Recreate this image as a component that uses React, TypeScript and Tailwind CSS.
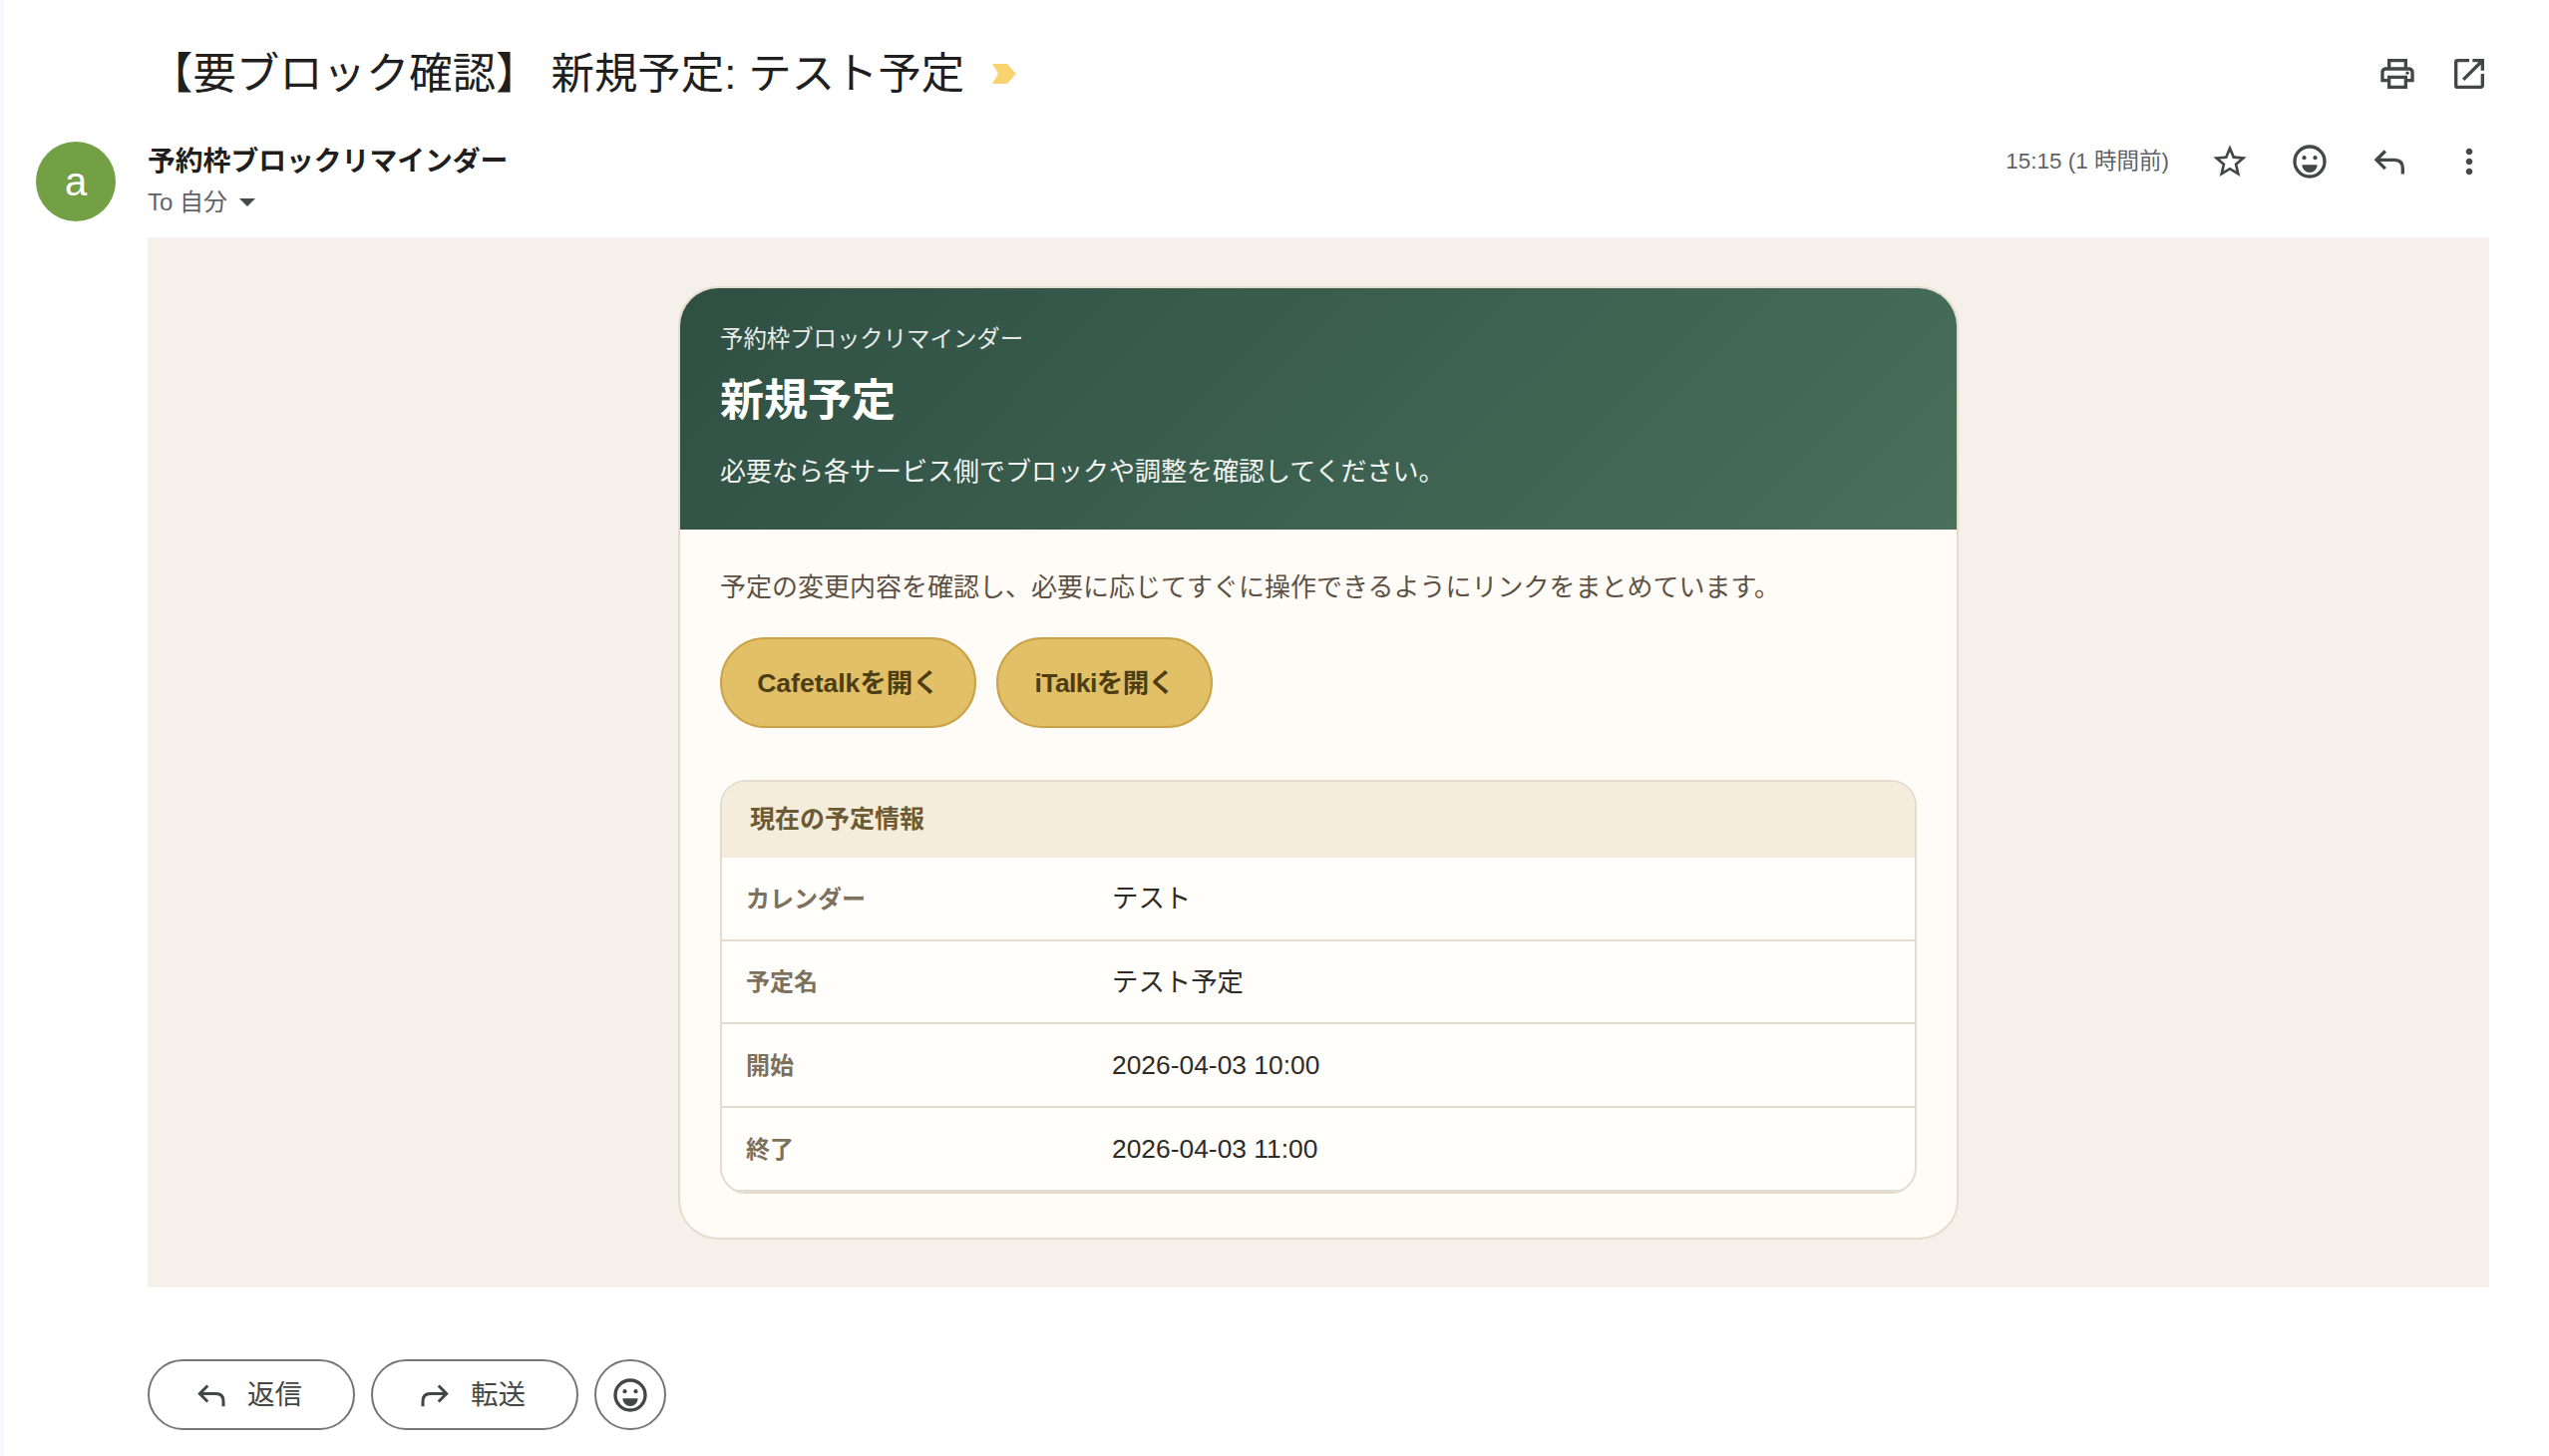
import { MdOutlineStarBorder, MdMoreVert, MdOutlinePrint, MdOpenInNew } from 'react-icons/md';

const ROWS = [
  { label: 'カレンダー', value: 'テスト' },
  { label: '予定名', value: 'テスト予定' },
  { label: '開始', value: '2026-04-03 10:00' },
  { label: '終了', value: '2026-04-03 11:00' },
];

// outline arrow, the icon packages only carry the filled one
function ReplyIcon({ size, flip }: { size: number; flip?: boolean }) {
  return (
    <svg width={size} height={size} viewBox="0 0 24 24" fill="none" stroke="currentColor" strokeWidth="2" className={flip ? '-scale-x-100' : ''}>
      <path d="M9.5 5.7 4.2 11l5.3 5.3M4.2 11H15q5 0 5 5v3.5" />
    </svg>
  );
}

function SmileIcon({ size }: { size: number }) {
  return (
    <svg width={size} height={size} viewBox="0 0 24 24" fill="none">
      <circle cx="12" cy="12" r="9" stroke="currentColor" strokeWidth="2" />
      <circle cx="8.7" cy="9.7" r="1.25" fill="currentColor" />
      <circle cx="15.3" cy="9.7" r="1.25" fill="currentColor" />
      <path d="M7.4 14h9.2a4.6 4.6 0 0 1-9.2 0z" fill="currentColor" />
    </svg>
  );
}

export default function App() {
  return (
    <div className="flex w-[2556px] h-[1460px] overflow-hidden bg-white font-['Liberation_Sans','Noto_Sans_CJK_JP',sans-serif]">
      <div className="w-[4px] bg-[#f8f8fe]" />
      <div className="flex-1 flex flex-col">
        {/* subject */}
        <div className="h-[142px] pl-[146px] pr-[60px] pt-[48px] flex items-start justify-between">
          <div className="flex items-center h-[52px]">
            <h1 className="text-[43.4px] leading-[52px] font-normal text-[#1f1f1f] whitespace-pre">【要ブロック確認】 新規予定: テスト予定</h1>
            <svg className="ml-[28px]" width="24" height="20" viewBox="0 0 24 20">
              <polygon points="0,0 15,0 24,10 15,20 0,20 6,10" fill="#f8d36f" />
            </svg>
          </div>
          <div className="flex items-center gap-[32px] text-[#444746] mt-[6px]">
            <MdOutlinePrint size={40} />
            <MdOpenInNew size={40} />
          </div>
        </div>

        {/* sender */}
        <div className="h-[96px] pl-[32px] pr-[60px] flex">
          <div className="w-[80px] h-[80px] rounded-full bg-[#74a045] text-white text-[40px] flex items-center justify-center">a</div>
          <div className="ml-[32px] pt-[2px] flex-1">
            <div className="text-[27.8px] leading-[36px] font-bold text-[#1f1f1f]">予約枠ブロックリマインダー</div>
            <div className="mt-[8px] flex items-center text-[24px] leading-[30px] text-[#5f6368]">
              <span>To 自分</span>
              <span className="ml-[12px] w-0 h-0 border-x-[8px] border-x-transparent border-t-[8px] border-t-[#444746]" />
            </div>
          </div>
          <div className="flex items-center h-[40px] text-[#444746]">
            <span className="text-[22.5px] text-[#5f6368] mr-[41px]">15:15 (1 時間前)</span>
            <div className="flex items-center gap-[40px]">
              <MdOutlineStarBorder size={40} />
              <SmileIcon size={40} />
              <ReplyIcon size={40} />
              <MdMoreVert size={40} />
            </div>
          </div>
        </div>

        {/* message body */}
        <div className="ml-[144px] mr-[60px] h-[1053px] bg-[#f5f1ea] pt-[49px] flex justify-center">
          <div className="w-[1284px] h-[956px] rounded-[40px] border-2 border-[#e4dccd] bg-[#fffcf7] overflow-hidden">
            <div className="h-[242px] bg-[linear-gradient(135deg,#2f4f43,#48705b)] px-[40px] pt-[35px] text-white">
              <div className="text-[23.4px] leading-[32px] text-[#e6ebe7]">予約枠ブロックリマインダー</div>
              <div className="mt-[18px] text-[44px] leading-[56px] font-bold">新規予定</div>
              <div className="mt-[25px] text-[26px] leading-[36px] text-[#f1f4f1]">必要なら各サービス側でブロックや調整を確認してください。</div>
            </div>
            <div className="px-[40px] pt-[40px]">
              <p className="text-[26px] leading-[36px] text-[#5d5245]">予定の変更内容を確認し、必要に応じてすぐに操作できるようにリンクをまとめています。</p>
              <div className="mt-[32px] flex gap-[20px]">
                <button className="w-[257px] h-[91px] pt-[2px] rounded-full border-2 border-[#c9a24a] bg-[#e2c067] text-[26.5px] font-bold text-[#4d3d13]">Cafetalkを開く</button>
                <button className="w-[217px] h-[91px] pt-[2px] rounded-full border-2 border-[#c9a24a] bg-[#e2c067] text-[26.5px] font-bold text-[#4d3d13] tracking-[-0.6px]">iTalkiを開く</button>
              </div>
              <div className="mt-[52px] rounded-[26px] border-2 border-[#e3dccf] overflow-hidden bg-[#fffefb]">
                <div className="h-[76px] bg-[#f4eddc] pl-[28px] flex items-center text-[25px] font-bold text-[#6b5a33]">現在の予定情報</div>
                {ROWS.map(r => (
                  <div key={r.label} className="h-[83.6px] last:h-[84px] pt-[2px] flex items-center border-b-2 border-[#e3dccf]">
                    <div className="w-[391px] pl-[24px] text-[24px] font-bold text-[#7d705c]">{r.label}</div>
                    <div className="text-[26.4px] text-[#2f2b26]">{r.value}</div>
                  </div>
                ))}
              </div>
            </div>
          </div>
        </div>

        {/* actions */}
        <div className="mt-[72px] ml-[144px] flex gap-[16px] text-[#444746]">
          <button className="w-[208px] h-[71px] rounded-full border-2 border-[#747775] flex items-center pl-[44px] gap-[18px] text-[27.5px]">
            <ReplyIcon size={36} />
            <span>返信</span>
          </button>
          <button className="w-[208px] h-[71px] rounded-full border-2 border-[#747775] flex items-center pl-[44px] gap-[18px] text-[27.5px]">
            <ReplyIcon size={36} flip />
            <span>転送</span>
          </button>
          <button className="w-[72px] h-[71px] rounded-full border-2 border-[#747775] flex items-center justify-center">
            <SmileIcon size={40} />
          </button>
        </div>
      </div>
    </div>
  );
}
